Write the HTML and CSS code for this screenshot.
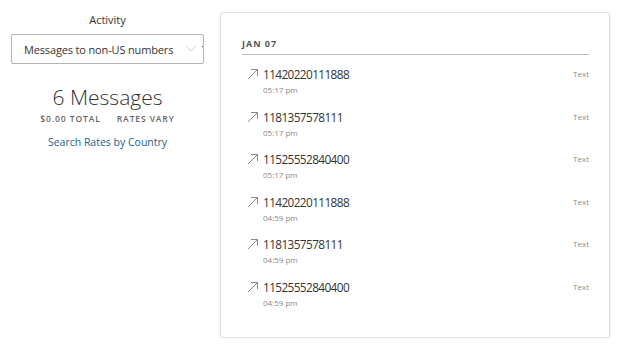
FILE: index.html
```html
<!DOCTYPE html>
<html lang="en">
<head>
    <meta charset="UTF-8">
    <title>Activity</title>
    <link rel="stylesheet" href="styles.css">
</head>
<body>
    <div class="page">
        <div class="sidebar">
            <div class="field-label">Activity</div>
            <div class="select-box">
                <span class="select-text">Messages to non-US numbers</span>
                <svg class="chevron" width="10" height="6" viewBox="0 0 10 6"><path d="M0.5 0.5 L5 5 L9.5 0.5" fill="none" stroke="#cfcfcf" stroke-width="1"/></svg>
                <span class="caret"></span>
            </div>

            <div class="summary">
                <div class="count">6 Messages</div>
                <div class="totals">
                    <span>$0.00 TOTAL</span>
                    <span>RATES VARY</span>
                </div>
                <a class="rates-link" href="#">Search Rates by Country</a>
            </div>
        </div>

        <div class="card">
            <div class="day-header">JAN 07</div>
            <div class="msg-list">
                <div class="msg-row">
                    <svg class="arrow" width="12" height="12" viewBox="0 0 12 12"><path d="M1 11 L10.5 1.5 M4 1.5 H10.5 V8" fill="none" stroke="#8a8a8a" stroke-width="1"/></svg>
                    <div class="msg-body">
                        <div class="msg-number">11420220111888</div>
                        <div class="msg-time">05:17 pm</div>
                    </div>
                    <div class="msg-type">Text</div>
                </div>
                <div class="msg-row">
                    <svg class="arrow" width="12" height="12" viewBox="0 0 12 12"><path d="M1 11 L10.5 1.5 M4 1.5 H10.5 V8" fill="none" stroke="#8a8a8a" stroke-width="1"/></svg>
                    <div class="msg-body">
                        <div class="msg-number">1181357578111</div>
                        <div class="msg-time">05:17 pm</div>
                    </div>
                    <div class="msg-type">Text</div>
                </div>
                <div class="msg-row">
                    <svg class="arrow" width="12" height="12" viewBox="0 0 12 12"><path d="M1 11 L10.5 1.5 M4 1.5 H10.5 V8" fill="none" stroke="#7a8c9c" stroke-width="1"/></svg>
                    <div class="msg-body">
                        <div class="msg-number">11525552840400</div>
                        <div class="msg-time">05:17 pm</div>
                    </div>
                    <div class="msg-type">Text</div>
                </div>
                <div class="msg-row">
                    <svg class="arrow" width="12" height="12" viewBox="0 0 12 12"><path d="M1 11 L10.5 1.5 M4 1.5 H10.5 V8" fill="none" stroke="#8a8a8a" stroke-width="1"/></svg>
                    <div class="msg-body">
                        <div class="msg-number">11420220111888</div>
                        <div class="msg-time">04:59 pm</div>
                    </div>
                    <div class="msg-type">Text</div>
                </div>
                <div class="msg-row">
                    <svg class="arrow" width="12" height="12" viewBox="0 0 12 12"><path d="M1 11 L10.5 1.5 M4 1.5 H10.5 V8" fill="none" stroke="#8a8a8a" stroke-width="1"/></svg>
                    <div class="msg-body">
                        <div class="msg-number">1181357578111</div>
                        <div class="msg-time">04:59 pm</div>
                    </div>
                    <div class="msg-type">Text</div>
                </div>
                <div class="msg-row">
                    <svg class="arrow" width="12" height="12" viewBox="0 0 12 12"><path d="M1 11 L10.5 1.5 M4 1.5 H10.5 V8" fill="none" stroke="#7a8c9c" stroke-width="1"/></svg>
                    <div class="msg-body">
                        <div class="msg-number">11525552840400</div>
                        <div class="msg-time">04:59 pm</div>
                    </div>
                    <div class="msg-type">Text</div>
                </div>
            </div>
        </div>
    </div>
</body>
</html>
```

FILE: styles.css
```css
* {
    margin: 0;
    padding: 0;
    box-sizing: border-box;
}

body {
    font-family: 'Open Sans', 'Liberation Sans', sans-serif;
    background: #fff;
    color: #333;
}

.page {
    display: flex;
    align-items: flex-start;
    padding: 12px 0 0 11px;
}

/* left column */
.sidebar {
    width: 193px;
    display: flex;
    flex-direction: column;
    align-items: center;
}

.field-label {
    font-size: 11px;
    line-height: 15px;
    color: #333;
    margin-bottom: 7px;
}

.select-box {
    width: 193px;
    height: 30px;
    border: 1px solid #b4b4b4;
    border-radius: 2px;
    display: flex;
    align-items: center;
    padding-left: 12px;
    overflow: hidden;
}

.select-text {
    font-size: 11px;
    color: #333;
    flex: 1;
    letter-spacing: -0.15px;
}

.chevron {
    margin-right: 6px;
}

.caret {
    width: 0;
    height: 0;
    border-left: 2px solid transparent;
    border-right: 2px solid transparent;
    border-top: 3px solid #222;
    margin-right: -3px;
    margin-top: -4px;
}

.summary {
    display: flex;
    flex-direction: column;
    align-items: center;
    margin-top: 20px;
}

.count {
    font-size: 21px;
    font-weight: 300;
    line-height: 26px;
    color: #333;
}

.totals {
    display: flex;
    gap: 16px;
    margin-top: 3px;
    font-size: 8.5px;
    font-weight: 600;
    letter-spacing: 0.9px;
    color: #666;
    line-height: 12px;
}

.rates-link {
    margin-top: 10px;
    font-size: 10.5px;
    color: #1d5f8c;
    text-decoration: none;
}

/* right card */
.card {
    margin-left: 16px;
    width: 390px;
    height: 326px;
    border: 1px solid #dde0e3;
    border-radius: 3px;
    box-shadow: 0 1px 3px rgba(0, 0, 0, 0.12);
    padding: 24px 20px 0 21px;
}

.day-header {
    font-size: 9px;
    font-weight: 700;
    letter-spacing: 1px;
    color: #555;
    line-height: 14px;
    padding-bottom: 3px;
    border-bottom: 1px solid #bbb;
}

.msg-list {
    padding-top: 11px;
}

.msg-row {
    display: flex;
    align-items: flex-start;
    height: 42.6px;
}

.arrow {
    margin: 2px 4px 0 5px;
    flex-shrink: 0;
}

.msg-body {
    flex: 1;
}

.msg-number {
    font-size: 11.8px;
    line-height: 17px;
    color: #333;
    letter-spacing: -0.6px;
}

.msg-time {
    font-size: 8px;
    line-height: 14px;
    color: #888;
}

.msg-type {
    font-size: 8px;
    color: #8c8c8c;
    line-height: 15px;
}
```
